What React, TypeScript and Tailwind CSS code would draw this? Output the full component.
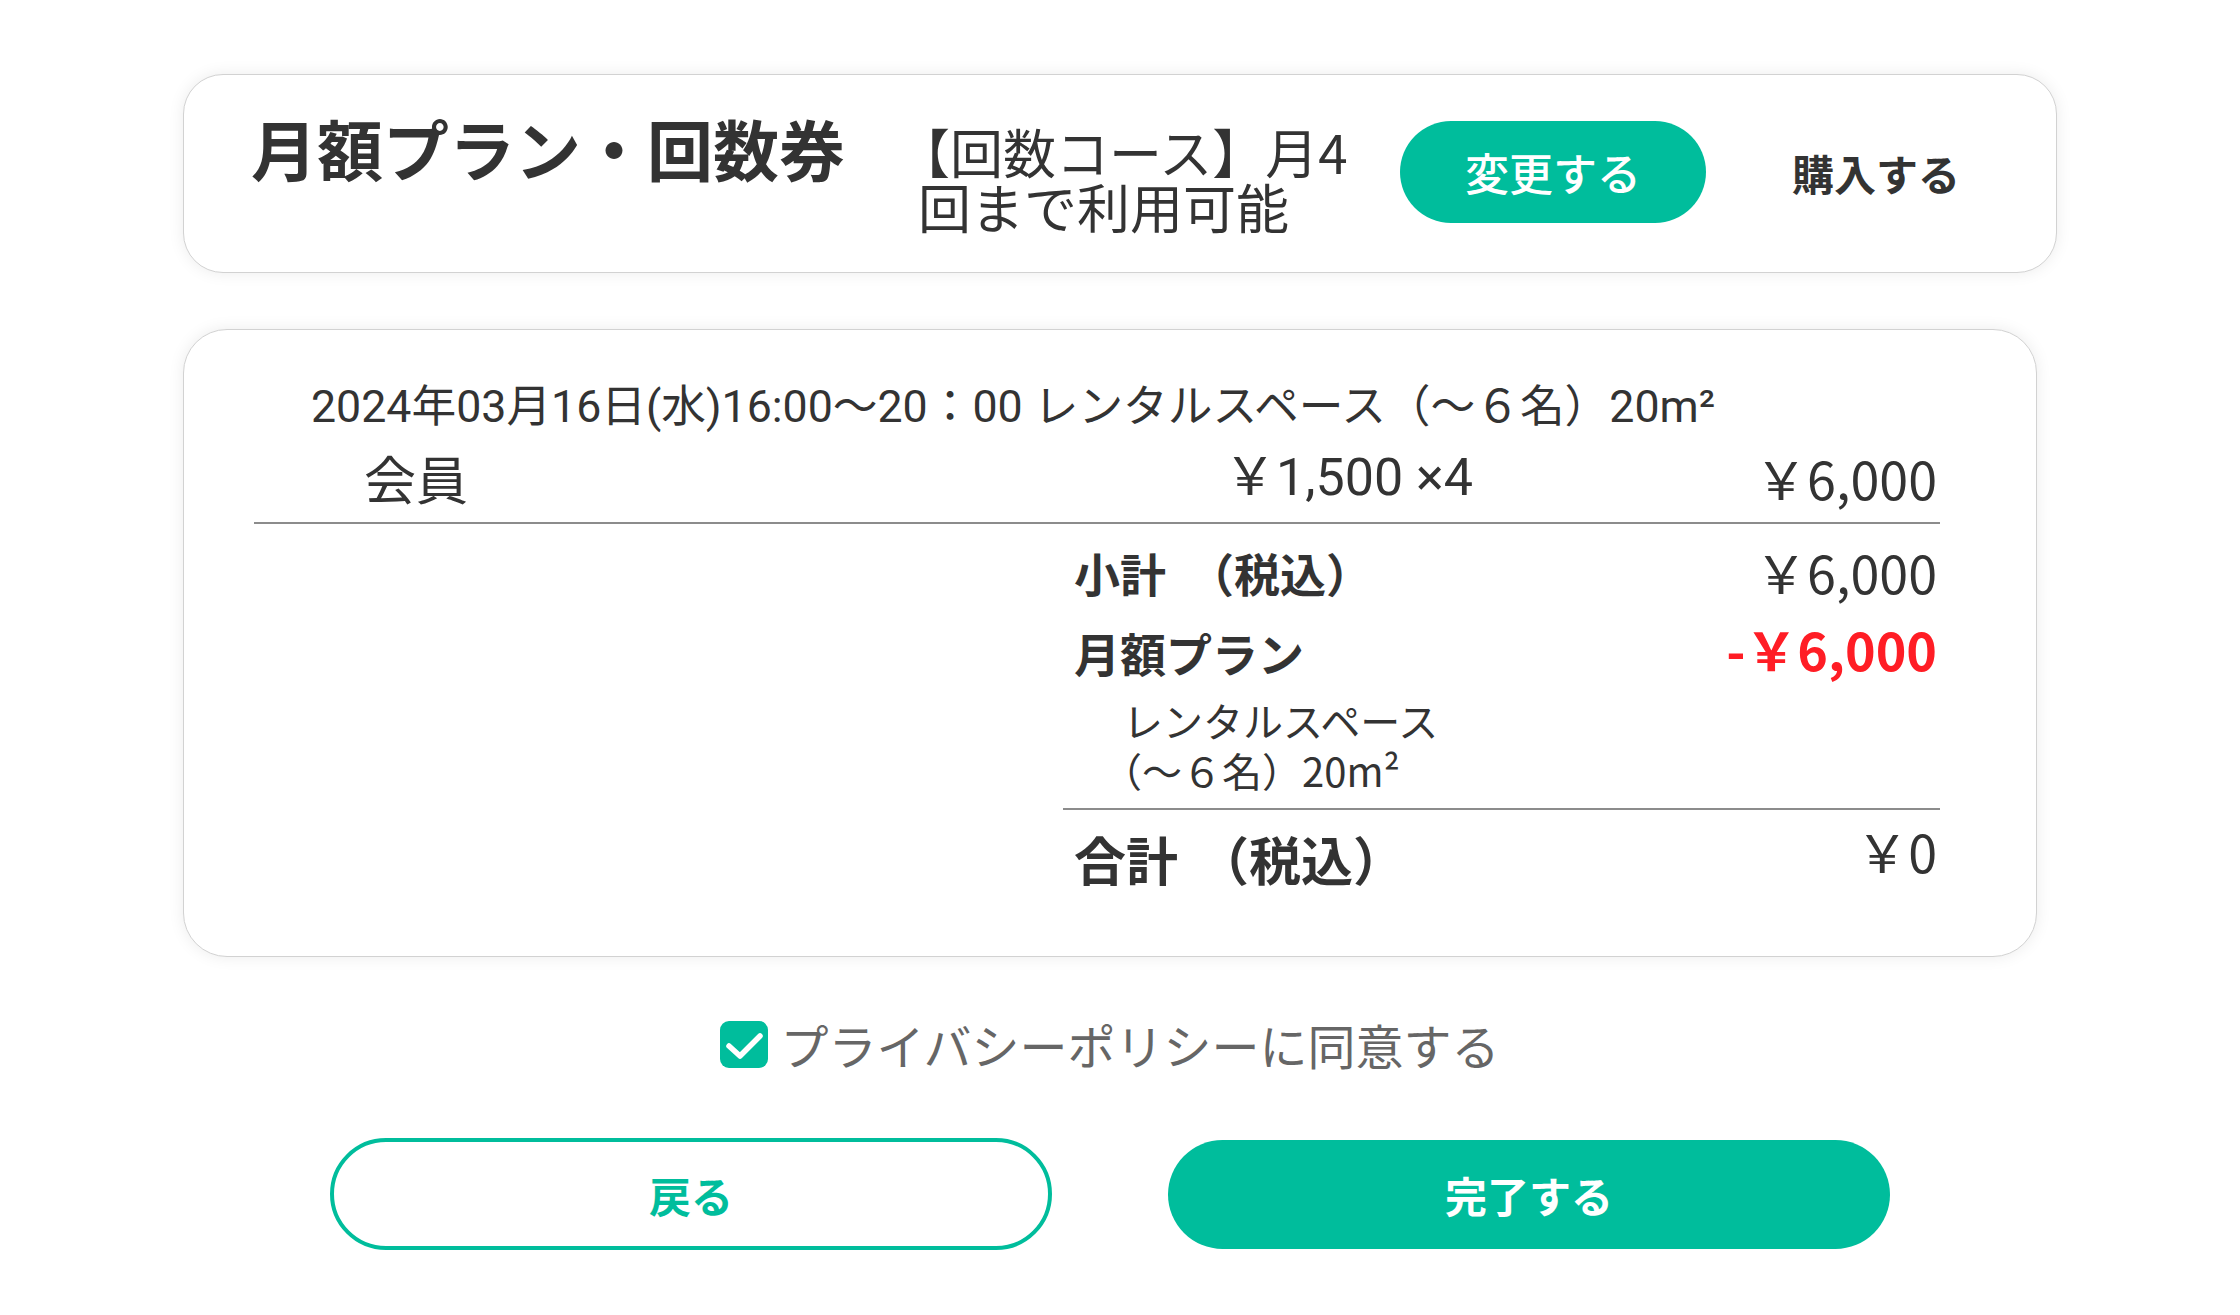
import React from 'react';

const cjk = "font-['Noto_Sans_CJK_JP','Noto_Sans',sans-serif]";
const roboto = "font-['Roboto','Noto_Sans_CJK_JP',sans-serif]";

function PlanCard() {
  return (
    <div className="ml-[183px] flex h-[199px] w-[1874px] items-start rounded-[40px] border border-[#d2d2d2] bg-white pl-[67px] shadow-[0_0_16px_rgba(0,0,0,0.08)]">
      <h1 className="mt-[33px] whitespace-nowrap text-[66px] font-bold leading-[1.2] text-[#333]">
        月額プラン・回数券
      </h1>
      <p className="ml-[73px] mt-[49px] flex w-[440px] flex-col whitespace-nowrap text-[53px] leading-[55px] text-[#333]">
        <span className="-ml-[21px]">【回数コース】月4</span>
        <span>回まで利用可能</span>
      </p>
      <button className="ml-[42px] mt-[46px] flex h-[102px] w-[306px] items-center justify-center rounded-full bg-[#00bd9c] text-[44px] font-medium text-white">
        変更する
      </button>
      <button className="ml-[86px] mt-[66px] text-[42px] font-bold leading-[1.5] text-[#333]">
        購入する
      </button>
    </div>
  );
}

function SummaryCard() {
  return (
    <div className="ml-[183px] mt-[56px] w-[1854px] rounded-[44px] border border-[#d2d2d2] bg-white pb-[57px] pl-[70px] pr-[96px] pt-[46px] shadow-[0_0_16px_rgba(0,0,0,0.08)]">
      {/* booking line */}
      <p className={`${roboto} whitespace-nowrap pl-[57px] text-[44.7px] leading-[63px] text-[#333]`}>
        2024年03月16日(水)16:00～20：00 レンタルスペース（～６名）20m²
      </p>
      <div className="flex h-[78px] items-center text-[52px] text-[#333]">
        <span className="w-[970px] pl-[110px]">会員</span>
        <span className={roboto}>￥1,500 ×4</span>
        <span className="flex-1 pr-[3px] text-right">￥6,000</span>
      </div>
      <div className="mt-[5px] h-[2px] bg-[#8c8c8c]" />

      {/* totals */}
      <div className="ml-[809px]">
        <div className="mt-[8px] flex h-[80px] items-center justify-between pl-[11px] pr-[3px] text-[#333]">
          <span className="text-[46px] font-bold">
            小計<span className="ml-[22px]">（税込）</span>
          </span>
          <span className="text-[52px]">￥6,000</span>
        </div>
        <div className="flex h-[80px] items-center justify-between pl-[11px] pr-[3px]">
          <span className="text-[46px] font-bold text-[#333]">月額プラン</span>
          <span className="mb-[6px] text-[52px] font-bold text-[#ff1d25]">-￥6,000</span>
        </div>
        <p className="mt-[3px] flex flex-col pl-[60px] text-[40px] leading-[50px] text-[#333]">
          <span>レンタルスペース</span>
          <span className="-ml-[21px]">（～６名）20m²</span>
        </p>
        <div className="mt-[13px] h-[2px] bg-[#8c8c8c]" />
        <div className="mt-[9px] flex h-[80px] items-center justify-between pl-[11px] pr-[3px] text-[#333]">
          <span className="text-[52px] font-bold">
            合計<span className="ml-[19px]">（税込）</span>
          </span>
          <span className="mb-[16px] text-[52px]">￥0</span>
        </div>
      </div>
    </div>
  );
}

function CheckIcon() {
  return (
    <span className="flex h-[47px] w-[48px] items-center justify-center rounded-[9px] bg-[#00bd9c]">
      <svg width="48" height="47" viewBox="0 0 48 47" fill="none">
        <path d="M9 25 L20 35 L40 15" stroke="#fff" strokeWidth="5.5" strokeLinecap="round" strokeLinejoin="round" />
      </svg>
    </span>
  );
}

export default function App() {
  return (
    <div className={`${cjk} min-h-screen w-[2240px] bg-white pt-[74px]`}>
      <PlanCard />
      <SummaryCard />

      <div className="ml-[183px] w-[1854px]">
        <label className="mt-[51px] flex items-center justify-center gap-[12px]">
          <CheckIcon />
          <span className="text-[48px] leading-[72px] text-[#666]">プライバシーポリシーに同意する</span>
        </label>
        <div className="mt-[58px] flex items-center justify-center gap-[116px]">
          <button className="flex h-[112px] w-[722px] items-center justify-center rounded-full border-4 border-[#00bd9c] bg-white text-[42px] font-bold text-[#00bd9c]">
            戻る
          </button>
          <button className="flex h-[109px] w-[722px] items-center justify-center rounded-full bg-[#00bd9c] text-[42px] font-bold text-white">
            完了する
          </button>
        </div>
      </div>
    </div>
  );
}
